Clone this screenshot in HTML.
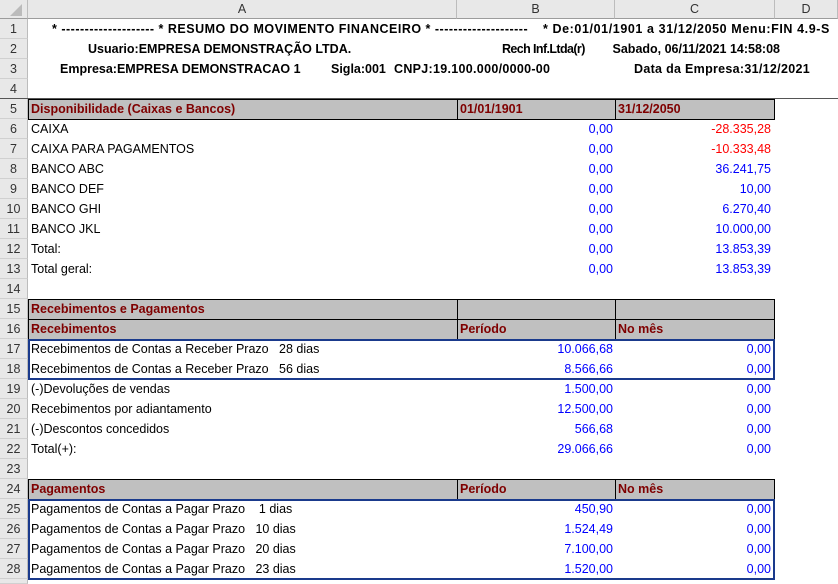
<!DOCTYPE html>
<html><head><meta charset="utf-8"><style>
body{margin:0;width:838px;height:584px;overflow:hidden;background:#fff;font-family:"Liberation Sans",Arial,sans-serif;font-size:12.5px;color:#000;position:relative}
div{position:absolute;box-sizing:border-box}
.t{white-space:nowrap;line-height:20px;height:20px}
.r{text-align:right}
.b{font-weight:bold}
.rn{left:0;width:28px;height:20px;background:#e8e8e8;border-right:1px solid #bcbcbc;border-bottom:1px solid #d0d0d0;text-align:center;line-height:20px;font-size:12.5px;color:#333}
.ch{top:0;height:19px;background:#e8e8e8;border-right:1px solid #bcbcbc;border-bottom:1px solid #9c9c9c;text-align:center;line-height:19px;color:#333}
.g{background:#c0c0c0;height:21px;border:1px solid #000;border-right:none}
.h{color:#7f0000;font-weight:bold}
.bl{color:#0000ff}
.rd{color:#ff0000}
.box{border:2px solid #1a3a8c}
</style></head><body>
<div class="ch" style="left:0;width:28px"></div>
<div style="left:10px;top:4px;width:0;height:0;border-left:12px solid transparent;border-bottom:12px solid #bbb"></div>
<div class="ch" style="left:28px;width:429px">A</div>
<div class="ch" style="left:457px;width:158px">B</div>
<div class="ch" style="left:615px;width:160px">C</div>
<div class="ch" style="left:775px;width:63px">D</div>

<div class="rn" style="top:19px">1</div><div class="rn" style="top:39px">2</div><div class="rn" style="top:59px">3</div><div class="rn" style="top:79px">4</div><div class="rn" style="top:99px">5</div><div class="rn" style="top:119px">6</div><div class="rn" style="top:139px">7</div><div class="rn" style="top:159px">8</div><div class="rn" style="top:179px">9</div><div class="rn" style="top:199px">10</div><div class="rn" style="top:219px">11</div><div class="rn" style="top:239px">12</div><div class="rn" style="top:259px">13</div><div class="rn" style="top:279px">14</div><div class="rn" style="top:299px">15</div><div class="rn" style="top:319px">16</div><div class="rn" style="top:339px">17</div><div class="rn" style="top:359px">18</div><div class="rn" style="top:379px">19</div><div class="rn" style="top:399px">20</div><div class="rn" style="top:419px">21</div><div class="rn" style="top:439px">22</div><div class="rn" style="top:459px">23</div><div class="rn" style="top:479px">24</div><div class="rn" style="top:499px">25</div><div class="rn" style="top:519px">26</div><div class="rn" style="top:539px">27</div><div class="rn" style="top:559px">28</div>
<div class="rn" style="top:579px;height:5px"></div>

<div style="left:0;top:98px;width:838px;height:1px;background:#555"></div>

<div class="t b" style="left:52px;top:19px;letter-spacing:0.5px">* -------------------- * RESUMO DO MOVIMENTO FINANCEIRO * --------------------</div>
<div class="t b r" style="right:8px;top:19px;letter-spacing:0.6px">* De:01/01/1901 a 31/12/2050 Menu:FIN 4.9-S</div>
<div class="t b" style="left:88px;top:39px">Usuario:EMPRESA DEMONSTRAÇÃO LTDA.</div>
<div class="t b" style="left:502px;top:39px;letter-spacing:-0.6px">Rech Inf.Ltda(r)</div>
<div class="t b r" style="right:58px;top:39px">Sabado, 06/11/2021 14:58:08</div>
<div class="t b" style="left:60px;top:59px">Empresa:EMPRESA DEMONSTRACAO 1</div>
<div class="t b" style="left:331px;top:59px">Sigla:001</div>
<div class="t b" style="left:394px;top:59px;letter-spacing:0.3px">CNPJ:19.100.000/0000-00</div>
<div class="t b" style="left:634px;top:59px;letter-spacing:0.3px">Data da Empresa:31/12/2021</div>

<!-- row 5 -->
<div class="g" style="left:28px;top:99px;width:429px"></div>
<div class="g" style="left:457px;top:99px;width:158px"></div>
<div class="g" style="left:615px;top:99px;width:160px;border-right:1px solid #000"></div>
<div class="t h" style="left:31px;top:99px">Disponibilidade (Caixas e Bancos)</div>
<div class="t h" style="left:460px;top:99px">01/01/1901</div>
<div class="t h" style="left:618px;top:99px">31/12/2050</div>

<div class="t" style="left:31px;top:119px">CAIXA</div>
<div class="t" style="left:31px;top:139px">CAIXA PARA PAGAMENTOS</div>
<div class="t" style="left:31px;top:159px">BANCO ABC</div>
<div class="t" style="left:31px;top:179px">BANCO DEF</div>
<div class="t" style="left:31px;top:199px">BANCO GHI</div>
<div class="t" style="left:31px;top:219px">BANCO JKL</div>
<div class="t" style="left:31px;top:239px">Total:</div>
<div class="t" style="left:31px;top:259px">Total geral:</div>
<div class="t r bl" style="right:225px;top:119px">0,00</div>
<div class="t r bl" style="right:225px;top:139px">0,00</div>
<div class="t r bl" style="right:225px;top:159px">0,00</div>
<div class="t r bl" style="right:225px;top:179px">0,00</div>
<div class="t r bl" style="right:225px;top:199px">0,00</div>
<div class="t r bl" style="right:225px;top:219px">0,00</div>
<div class="t r bl" style="right:225px;top:239px">0,00</div>
<div class="t r bl" style="right:225px;top:259px">0,00</div>
<div class="t r rd" style="right:67px;top:119px">-28.335,28</div>
<div class="t r rd" style="right:67px;top:139px">-10.333,48</div>
<div class="t r bl" style="right:67px;top:159px">36.241,75</div>
<div class="t r bl" style="right:67px;top:179px">10,00</div>
<div class="t r bl" style="right:67px;top:199px">6.270,40</div>
<div class="t r bl" style="right:67px;top:219px">10.000,00</div>
<div class="t r bl" style="right:67px;top:239px">13.853,39</div>
<div class="t r bl" style="right:67px;top:259px">13.853,39</div>

<!-- rows 15-16 -->
<div class="g" style="left:28px;top:299px;width:429px"></div>
<div class="g" style="left:457px;top:299px;width:158px"></div>
<div class="g" style="left:615px;top:299px;width:160px;border-right:1px solid #000"></div>
<div class="g" style="left:28px;top:319px;width:429px"></div>
<div class="g" style="left:457px;top:319px;width:158px"></div>
<div class="g" style="left:615px;top:319px;width:160px;border-right:1px solid #000"></div>
<div class="t h" style="left:31px;top:299px">Recebimentos e Pagamentos</div>
<div class="t h" style="left:31px;top:319px">Recebimentos</div>
<div class="t h" style="left:460px;top:319px">Período</div>
<div class="t h" style="left:618px;top:319px">No mês</div>

<div class="box" style="left:28px;top:339px;width:747px;height:41px"></div>
<div class="t" style="left:31px;top:339px">Recebimentos de Contas a Receber Prazo&nbsp;&nbsp; 28 dias</div>
<div class="t" style="left:31px;top:359px">Recebimentos de Contas a Receber Prazo&nbsp;&nbsp; 56 dias</div>
<div class="t" style="left:31px;top:379px">(-)Devoluções de vendas</div>
<div class="t" style="left:31px;top:399px">Recebimentos por adiantamento</div>
<div class="t" style="left:31px;top:419px">(-)Descontos concedidos</div>
<div class="t" style="left:31px;top:439px">Total(+):</div>
<div class="t r bl" style="right:225px;top:339px">10.066,68</div>
<div class="t r bl" style="right:225px;top:359px">8.566,66</div>
<div class="t r bl" style="right:225px;top:379px">1.500,00</div>
<div class="t r bl" style="right:225px;top:399px">12.500,00</div>
<div class="t r bl" style="right:225px;top:419px">566,68</div>
<div class="t r bl" style="right:225px;top:439px">29.066,66</div>
<div class="t r bl" style="right:67px;top:339px">0,00</div>
<div class="t r bl" style="right:67px;top:359px">0,00</div>
<div class="t r bl" style="right:67px;top:379px">0,00</div>
<div class="t r bl" style="right:67px;top:399px">0,00</div>
<div class="t r bl" style="right:67px;top:419px">0,00</div>
<div class="t r bl" style="right:67px;top:439px">0,00</div>

<!-- row 24 -->
<div class="g" style="left:28px;top:479px;width:429px"></div>
<div class="g" style="left:457px;top:479px;width:158px"></div>
<div class="g" style="left:615px;top:479px;width:160px;border-right:1px solid #000"></div>
<div class="t h" style="left:31px;top:479px">Pagamentos</div>
<div class="t h" style="left:460px;top:479px">Período</div>
<div class="t h" style="left:618px;top:479px">No mês</div>

<div class="box" style="left:28px;top:499px;width:747px;height:81px"></div>
<div class="t" style="left:31px;top:499px">Pagamentos de Contas a Pagar Prazo&nbsp;&nbsp;&nbsp; 1 dias</div>
<div class="t" style="left:31px;top:519px">Pagamentos de Contas a Pagar Prazo&nbsp;&nbsp; 10 dias</div>
<div class="t" style="left:31px;top:539px">Pagamentos de Contas a Pagar Prazo&nbsp;&nbsp; 20 dias</div>
<div class="t" style="left:31px;top:559px">Pagamentos de Contas a Pagar Prazo&nbsp;&nbsp; 23 dias</div>
<div class="t r bl" style="right:225px;top:499px">450,90</div>
<div class="t r bl" style="right:225px;top:519px">1.524,49</div>
<div class="t r bl" style="right:225px;top:539px">7.100,00</div>
<div class="t r bl" style="right:225px;top:559px">1.520,00</div>
<div class="t r bl" style="right:67px;top:499px">0,00</div>
<div class="t r bl" style="right:67px;top:519px">0,00</div>
<div class="t r bl" style="right:67px;top:539px">0,00</div>
<div class="t r bl" style="right:67px;top:559px">0,00</div>
</body></html>
